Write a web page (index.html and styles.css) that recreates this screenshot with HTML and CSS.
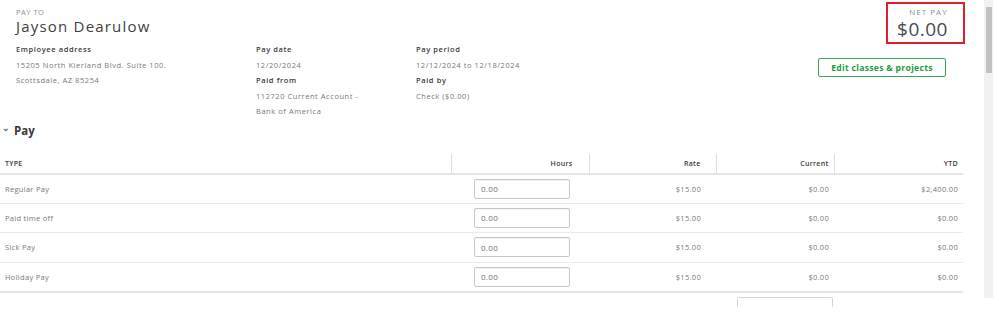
FILE: index.html
```html
<!DOCTYPE html>
<html lang="en">
<head>
  <meta charset="UTF-8" />
  <title>Paycheck | Jayson Dearulow</title>
  <link rel="stylesheet" href="styles.css">
</head>
<body>
  <div class="screen">
    <main class="sheet">
      <section class="top">
        <div class="top-left">
          <div class="payto-label">PAY TO</div>
          <h1 class="payee">Jayson Dearulow</h1>
          <div class="details">
            <div class="col col-addr">
              <div class="lbl">Employee address</div>
              <div class="val">15205 North Kierland Blvd. Suite 100.</div>
              <div class="val">Scottsdale, AZ 85254</div>
            </div>
            <div class="col col-date">
              <div class="lbl">Pay date</div>
              <div class="val">12/20/2024</div>
              <div class="lbl">Paid from</div>
              <div class="val">112720 Current Account -</div>
              <div class="val">Bank of America</div>
            </div>
            <div class="col col-period">
              <div class="lbl">Pay period</div>
              <div class="val">12/12/2024 to 12/18/2024</div>
              <div class="lbl">Paid by</div>
              <div class="val">Check ($0.00)</div>
            </div>
          </div>
        </div>
        <div class="top-right">
          <div class="netpay">
            <span class="netpay-lbl">NET PAY</span>
            <span class="netpay-amt">$0.00</span>
          </div>
          <button class="edit-btn">Edit classes &amp; projects</button>
        </div>
      </section>

      <h2 class="section-title"><span class="chev">&#8964;</span>Pay</h2>

      <table class="pay-table">
        <colgroup>
          <col class="c-type"><col class="c-hours"><col class="c-rate"><col class="c-cur"><col class="c-ytd">
        </colgroup>
        <thead>
          <tr>
            <th class="t-type">TYPE</th>
            <th class="t-hours">Hours</th>
            <th class="t-rate">Rate</th>
            <th class="t-cur">Current</th>
            <th class="t-ytd">YTD</th>
          </tr>
        </thead>
        <tbody id="payBody"></tbody>
      </table>

      <div class="total-row"><div class="total-box"></div></div>
    </main>

    <div class="scrollbar">
      <div class="sb-arrow"></div>
      <div class="sb-thumb"></div>
    </div>
  </div>

  <script>
    const rows = [
      {type:'Regular Pay', rate:'$15.00', cur:'$0.00', ytd:'$2,400.00'},
      {type:'Paid time off', rate:'$15.00', cur:'$0.00', ytd:'$0.00'},
      {type:'Sick Pay', rate:'$15.00', cur:'$0.00', ytd:'$0.00'},
      {type:'Holiday Pay', rate:'$15.00', cur:'$0.00', ytd:'$0.00'}
    ];
    const tbody = document.getElementById('payBody');
    rows.forEach(r=>{
      const tr = document.createElement('tr');
      tr.innerHTML = `
        <td class="t-type">${r.type}</td>
        <td class="t-hours"><input class="hours-in" value="0.00"></td>
        <td class="t-rate">${r.rate}</td>
        <td class="t-cur">${r.cur}</td>
        <td class="t-ytd">${r.ytd}</td>
      `;
      tbody.appendChild(tr);
    });
  </script>
</body>
</html>
```

FILE: styles.css
```css
:root{
  --ink:#393a3d;
  --muted:#6b6c72;
  --light:#8d9096;
  --line:#e8eaed;
  --green:#2ca01c;
  --red:#e0202a;
}
*{box-sizing:border-box;font-family:"Open Sans","Noto Sans",Arial,sans-serif}
body{margin:0;background:#fff;color:var(--ink)}

.screen{display:flex;width:999px;height:316px;overflow:hidden}
.sheet{width:965px;flex:none}

.top{display:flex;justify-content:space-between}
.top-left{padding:7px 0 0 16px}
.payto-label{font-size:7.5px;color:var(--light);line-height:10px;letter-spacing:.5px}
.payee{margin:-1px 0 0;font-size:15px;font-weight:400;line-height:20px;letter-spacing:1.2px;color:#3f4044}

.details{display:grid;grid-template-columns:240px 160px 240px;margin-top:6px}
.lbl{font-size:7.5px;font-weight:600;line-height:15.5px;color:var(--ink);letter-spacing:.6px}
.val{font-size:7.5px;line-height:15.5px;color:#76777c;letter-spacing:.55px}

.top-right{display:flex;flex-direction:column;align-items:flex-end;padding-top:2px}
.netpay{
  width:79px;height:42px;border:2px solid var(--red);
  display:flex;flex-direction:column;align-items:center;padding-top:3px;
}
.netpay-lbl{font-size:8px;color:var(--light);line-height:9px;letter-spacing:1px;margin-left:6px}
.netpay-amt{font-size:19px;line-height:22px;color:#4a4b4f;margin:2px 0 0 -6px;letter-spacing:.5px}
.edit-btn{
  margin:14px 19px 0 0;width:128px;height:19px;
  background:#fff;border:1px solid #3aa65a;border-radius:2px;
  color:#1f9a3c;font-size:8.6px;font-weight:700;padding:0;letter-spacing:.3px;
}

.section-title{margin:3px 0 0;font-size:11.5px;font-weight:700;line-height:16px;display:flex;align-items:center}
.chev{font-size:9px;color:var(--muted);margin:0 4px 0 2px;line-height:8px;position:relative;top:-3px}

.pay-table{width:963px;border-collapse:collapse;margin-top:15px;table-layout:fixed}
.c-type{width:451px}.c-hours{width:138px}.c-rate{width:127px}.c-cur{width:118px}.c-ytd{width:129px}
.pay-table th{
  font-size:7px;font-weight:600;color:var(--ink);height:20px;padding:0 5px;letter-spacing:.3px;
  border-bottom:2px solid #e3e5e8;border-left:1px solid #dcdee2;
}
.pay-table th:first-child{border-left:none}
.pay-table td{
  font-size:7.5px;color:#76777c;height:29.5px;padding:0 5px;letter-spacing:.3px;
  border-bottom:1px solid var(--line);
}
.pay-table tr:last-child td{border-bottom:2px solid #e3e5e8}
.t-type{text-align:left}
.t-hours{text-align:left}
th.t-hours{text-align:right;padding-right:16px}
.t-rate{text-align:right;padding-right:15px !important}
.t-cur{text-align:right}
.t-ytd{text-align:right}
.hours-in{
  margin-left:18px;width:96px;height:20px;
  border:1px solid #c4c7cc;border-radius:2px;
  box-shadow:inset 0 1px 1px rgba(0,0,0,.05);
  font-size:8px;color:var(--muted);padding:0 6px;letter-spacing:.3px;
}

.total-row{display:flex;padding:4px 0 0 737px}
.total-box{width:96px;height:10px;border:1px solid #d4d6da;border-bottom:none;border-radius:2px 2px 0 0}

.scrollbar{width:9px;height:298px;background:#f1f1f1;margin-left:19px;position:relative}
.sb-arrow{height:6px}
.sb-thumb{width:6px;height:66px;margin:1px auto 0;background:#c1c1c1}
```
